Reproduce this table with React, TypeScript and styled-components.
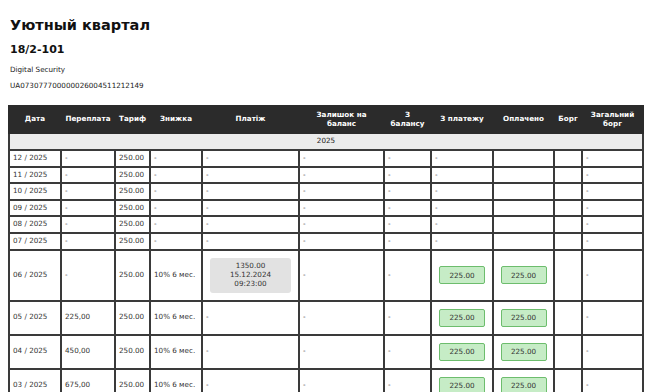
import styled, {createGlobalStyle} from "styled-components";

const GlobalStyle = createGlobalStyle`
  body {
    margin: 0;
    background: #ffffff;
    font-family: "DejaVu Sans", Verdana, sans-serif;
    color: #222;
  }
`;

const Page = styled.div`
  padding: 0 7px 20px 8px;
`;

const Title = styled.h1`
  font-size: 14.5px;
  font-weight: bold;
  margin: 17px 0 0 2px;
  color: #111;
`;

const Account = styled.h2`
  font-size: 11px;
  font-weight: bold;
  margin: 10px 0 0 2px;
  color: #111;
`;

const Info = styled.p<{$gap: number}>`
  font-size: 7.2px;
  margin: ${(p) => p.$gap}px 0 0 2px;
  color: #222;
`;

const Table = styled.table`
  width: 634px;
  margin-top: 15px;
  border-collapse: collapse;
  table-layout: fixed;
  font-size: 7.2px;
  line-height: 1.2;
`;

const Th = styled.th`
  background: #2b2b2b;
  color: #ffffff;
  font-weight: bold;
  padding: 4px 3px;
  border: 2px solid #2b2b2b;
  text-align: center;
`;

const YearCell = styled.td`
  background: #ebebeb;
  text-align: center;
  padding: 3px;
  border: 2px solid #3a3a3a;
  border-top: none;
  color: #222;
`;

const Td = styled.td<{$center?: boolean}>`
  border: 2px solid #3a3a3a;
  padding: 3px 3px;
  text-align: ${(p) => (p.$center ? "center" : "left")};
  vertical-align: middle;
  color: #333;
`;

const PaymentBox = styled.div`
  margin: 4px;
  padding: 4.5px 4px;
  background: #e2e2e2;
  border-radius: 3px;
  text-align: center;
  color: #333;
`;

const AmountButton = styled.button`
  display: inline-block;
  width: 46px;
  height: 18px;
  margin: 4px 0;
  padding: 0;
  background: #c6ecc6;
  border: 1.5px solid #6dbd6d;
  border-radius: 2px;
  font-family: "DejaVu Sans", Verdana, sans-serif;
  font-size: 7.2px;
  color: #333;
  vertical-align: middle;
`;

const widths = [52, 54, 35, 52, 97, 85, 47, 62, 61, 28, 61];

const headers = [
  "Дата",
  "Переплата",
  "Тариф",
  "Знижка",
  "Платіж",
  "Залишок на баланс",
  "З балансу",
  "З платежу",
  "Оплачено",
  "Борг",
  "Загальний борг",
];

type Row = {
  month: string;
  overpay: string;
  discount: string;
  payment?: string[];
  paid: boolean;
};

const rows: Row[] = [
  {month: "12 / 2025", overpay: "-", discount: "-", paid: false},
  {month: "11 / 2025", overpay: "-", discount: "-", paid: false},
  {month: "10 / 2025", overpay: "-", discount: "-", paid: false},
  {month: "09 / 2025", overpay: "-", discount: "-", paid: false},
  {month: "08 / 2025", overpay: "-", discount: "-", paid: false},
  {month: "07 / 2025", overpay: "-", discount: "-", paid: false},
  {
    month: "06 / 2025",
    overpay: "-",
    discount: "10% 6 мес.",
    payment: ["1350.00", "15.12.2024", "09:23:00"],
    paid: true,
  },
  {month: "05 / 2025", overpay: "225,00", discount: "10% 6 мес.", paid: true},
  {month: "04 / 2025", overpay: "450,00", discount: "10% 6 мес.", paid: true},
  {month: "03 / 2025", overpay: "675,00", discount: "10% 6 мес.", paid: true},
];

const App = () => {
  return (
    <Page>
      <GlobalStyle />
      <Title>Уютный квартал</Title>
      <Account>18/2-101</Account>
      <Info $gap={9}>Digital Security</Info>
      <Info $gap={7}>UA073077700000026004511212149</Info>
      <Table>
        <colgroup>
          {widths.map((w, i) => (
            <col key={i} style={{width: w}} />
          ))}
        </colgroup>
        <thead>
          <tr>
            {headers.map((h) => (
              <Th key={h}>{h}</Th>
            ))}
          </tr>
        </thead>
        <tbody>
          <tr>
            <YearCell colSpan={11}>2025</YearCell>
          </tr>
          {rows.map((r) => (
            <tr key={r.month}>
              <Td>{r.month}</Td>
              <Td>{r.overpay}</Td>
              <Td>250.00</Td>
              <Td>{r.discount}</Td>
              <Td>
                {r.payment ? (
                  <PaymentBox>
                    {r.payment.map((line) => (
                      <div key={line}>{line}</div>
                    ))}
                  </PaymentBox>
                ) : (
                  "-"
                )}
              </Td>
              <Td>-</Td>
              <Td>-</Td>
              <Td $center={r.paid}>
                {r.paid ? <AmountButton>225.00</AmountButton> : "-"}
              </Td>
              <Td $center>{r.paid && <AmountButton>225.00</AmountButton>}</Td>
              <Td />
              <Td>-</Td>
            </tr>
          ))}
        </tbody>
      </Table>
    </Page>
  );
};

export default App;
